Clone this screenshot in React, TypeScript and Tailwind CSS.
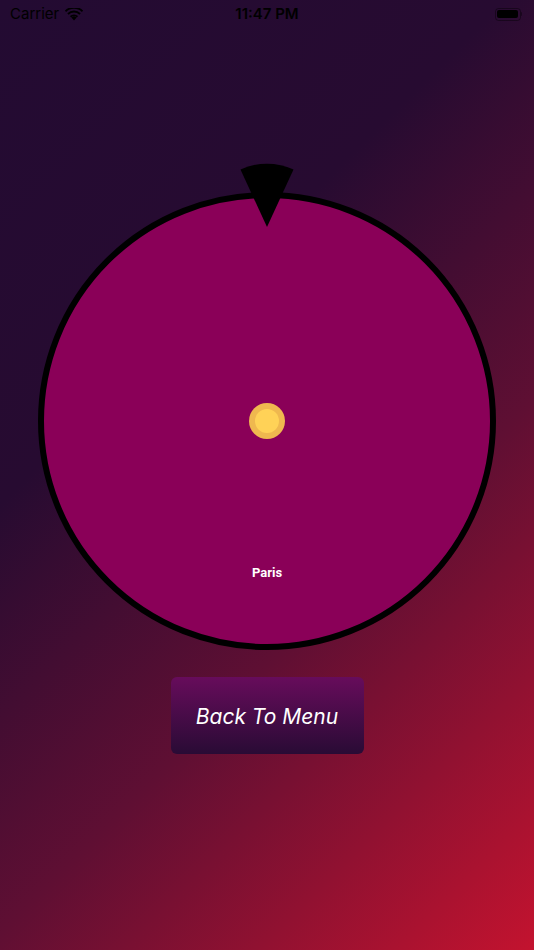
import React from 'react';

// Status bar wifi glyph
function Wifi() {
  return (
    <svg width="18" height="13" viewBox="0 0 18 13" fill="#000">
      <path d="M9 12.5l2.6-2.9a3.7 3.7 0 0 0-5.2 0z" />
      <path d="M4.9 8.1l1.2 1.3a4.1 4.1 0 0 1 5.8 0l1.2-1.3a5.9 5.9 0 0 0-8.2 0z" />
      <path d="M2.3 5.3l1.3 1.4a7.7 7.7 0 0 1 10.8 0l1.3-1.4a9.6 9.6 0 0 0-13.4 0z" />
      <path d="M-0.2 2.6l1.3 1.4a11.3 11.3 0 0 1 15.8 0l1.3-1.4a13.2 13.2 0 0 0-18.4 0z" />
    </svg>
  );
}

function Battery() {
  return (
    <div className="flex items-center">
      <div className="w-[26px] h-[13px] rounded-[3.5px] border border-black/40 p-[1.5px]">
        <div className="w-full h-full rounded-[2px] bg-black" />
      </div>
      <div className="w-[1.5px] h-[4px] bg-black/40 rounded-r-sm" />
    </div>
  );
}

function Wheel() {
  return (
    <div className="relative w-[458px] h-[458px]">
      <div className="w-full h-full rounded-full border-[6px] border-black bg-[#8a0058] flex flex-col items-center justify-center">
        <div className="w-[36px] h-[36px] rounded-full bg-[#efb84f] flex items-center justify-center">
          <div className="w-[24px] h-[24px] rounded-full bg-[#ffd257]" />
        </div>
      </div>
      <span className="absolute left-0 right-0 top-[371px] text-center text-white text-[13px] font-bold font-['Roboto',sans-serif]">
        Paris
      </span>
      {/* pointer */}
      <svg className="absolute left-[202px] top-[-31px]" width="54" height="70" viewBox="0 0 54 70">
        <path d="M27 66 L0.5 8.5 A63 63 0 0 1 53.5 8.5 Z" fill="#000" />
      </svg>
    </div>
  );
}

export default function App() {
  return (
    <div className="w-[534px] h-[950px] overflow-hidden flex flex-col bg-[linear-gradient(135deg,#230b32_0%,#270b31_34%,#5f0f33_63%,#c3132f_100%)] font-['Inter',sans-serif]">
      <div className="h-[28px] flex items-center justify-between px-[10px] text-black">
        <div className="flex items-center gap-[6px] w-[120px]">
          <span className="text-[15px]">Carrier</span>
          <Wifi />
        </div>
        <span className="text-[15px] font-semibold">11:47 PM</span>
        <div className="w-[120px] flex justify-end pr-[2px]">
          <Battery />
        </div>
      </div>

      <div className="flex justify-center mt-[164px]">
        <Wheel />
      </div>

      <div className="flex justify-center mt-[27px]">
        <button className="w-[193px] h-[77px] rounded-[6px] bg-[linear-gradient(180deg,#670c5b,#290b35)] text-white italic text-[21px] pt-[2px]">
          Back To Menu
        </button>
      </div>
    </div>
  );
}
